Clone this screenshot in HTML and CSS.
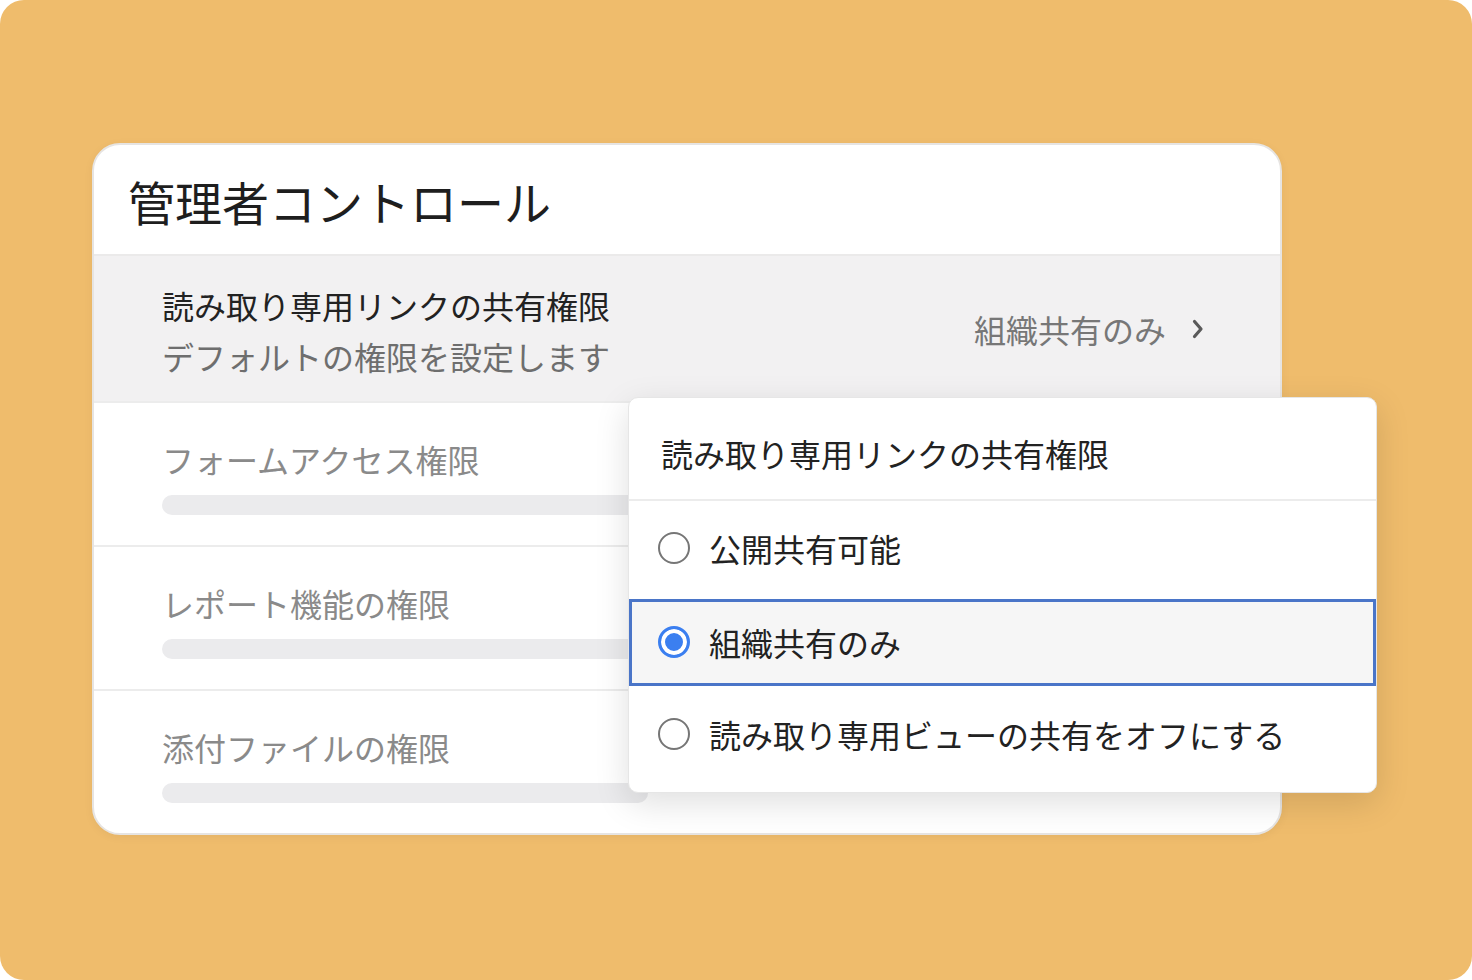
FILE: index.html
```html
<html>

<head>
    <meta charset="utf-8">
    <link rel="stylesheet" href="styles.css">
    <title>管理者コントロール</title>
</head>

<body>
    <div class="stage">
        <div class="card">
            <div class="card-title">管理者コントロール</div>

            <div class="row row-active">
                <div class="row-text">
                    <div class="row-name">読み取り専用リンクの共有権限</div>
                    <div class="row-desc">デフォルトの権限を設定します</div>
                </div>
                <div class="row-value">
                    組織共有のみ
                    <svg class="chevron" width="16" height="22" viewBox="0 0 16 22">
                        <path d="M4.5 3.5 L11 11 L4.5 18.5" fill="none" stroke="#5a5a5a" stroke-width="3.2" stroke-linecap="round" stroke-linejoin="round"/>
                    </svg>
                </div>
            </div>

            <div class="row">
                <div class="row-label">フォームアクセス権限</div>
                <div class="bar"></div>
            </div>

            <div class="row">
                <div class="row-label">レポート機能の権限</div>
                <div class="bar"></div>
            </div>

            <div class="row row-last">
                <div class="row-label">添付ファイルの権限</div>
                <div class="bar"></div>
            </div>

            <!-- dropdown sits over the rows -->
            <div class="menu">
                <div class="menu-head">読み取り専用リンクの共有権限</div>
                <div class="option option-first">
                    <span class="radio"></span>
                    <span>公開共有可能</span>
                </div>
                <div class="option option-selected">
                    <span class="radio radio-on"></span>
                    <span>組織共有のみ</span>
                </div>
                <div class="option option-last">
                    <span class="radio"></span>
                    <span>読み取り専用ビューの共有をオフにする</span>
                </div>
            </div>
        </div>
    </div>
</body>

</html>
```

FILE: styles.css
```css
body {
    margin: 0;
    background: #fff;
    font-family: "Noto Sans CJK JP", "Noto Sans", sans-serif;
    color: #222;
}

.stage {
    width: 1472px;
    height: 980px;
    box-sizing: border-box;
    padding: 143px 0 0 92px;
    background: #efbc6c;
    border-radius: 24px;
    overflow: hidden;
}

.card {
    position: relative;
    width: 1190px;
    height: 692px;
    box-sizing: border-box;
    background: #fff;
    border: 2px solid #e6e4e2;
    border-radius: 28px;
    box-shadow: 0 2px 10px rgba(0, 0, 0, 0.05);
}

.card-title {
    height: 111px;
    box-sizing: border-box;
    padding: 25px 0 0 34px;
    font-size: 47px;
    line-height: 62px;
    color: #1e1e1e;
    border-bottom: 2px solid #ebeaea;
}

.row {
    height: 144px;
    box-sizing: border-box;
    padding: 32px 0 0 68px;
    border-bottom: 2px solid #ececec;
}

.row-last {
    border-bottom: none;
}

.row-active {
    height: 147px;
    padding: 4px 74px 0 68px;
    display: flex;
    align-items: center;
    justify-content: space-between;
    background: #f2f1f2;
}

.row-name {
    font-size: 32px;
    line-height: 51px;
    color: #222;
}

.row-desc {
    font-size: 32px;
    line-height: 51px;
    color: #6e6e6e;
}

.row-value {
    display: flex;
    align-items: center;
    gap: 24px;
    margin-top: -4px;
    font-size: 32px;
    color: #777;
}

.row-label {
    font-size: 32px;
    line-height: 48px;
    color: #8a8a8a;
}

.bar {
    width: 486px;
    height: 20px;
    margin-top: 12px;
    border-radius: 10px;
    background: #ebebed;
}

.menu {
    position: absolute;
    left: 534px;
    top: 252px;
    width: 749px;
    height: 396px;
    box-sizing: border-box;
    background: #fff;
    border: 1px solid #e6e6e6;
    border-radius: 10px;
    box-shadow: 0 10px 34px rgba(0, 0, 0, 0.13);
    overflow: hidden;
}

.menu-head {
    height: 103px;
    box-sizing: border-box;
    padding: 31px 0 0 32px;
    font-size: 32px;
    line-height: 48px;
    color: #222;
    border-bottom: 2px solid #ececec;
}

.option {
    height: 98px;
    box-sizing: border-box;
    display: flex;
    align-items: center;
    gap: 19px;
    padding-left: 29px;
    font-size: 32px;
    color: #222;
}

.option-first {
    padding-bottom: 5px;
}

.option-selected {
    height: 87px;
    padding-left: 26px;
    padding-bottom: 2px;
    background: #f6f6f6;
    border: 3px solid #4a75c8;
}

.option-last {
    height: 96px;
}

.radio {
    width: 32px;
    height: 32px;
    box-sizing: border-box;
    border: 2.5px solid #767676;
    border-radius: 50%;
    flex-shrink: 0;
}

.radio-on {
    border: 3px solid #3b7ff0;
    background: #3b7ff0;
    box-shadow: inset 0 0 0 4px #fff;
}
```
